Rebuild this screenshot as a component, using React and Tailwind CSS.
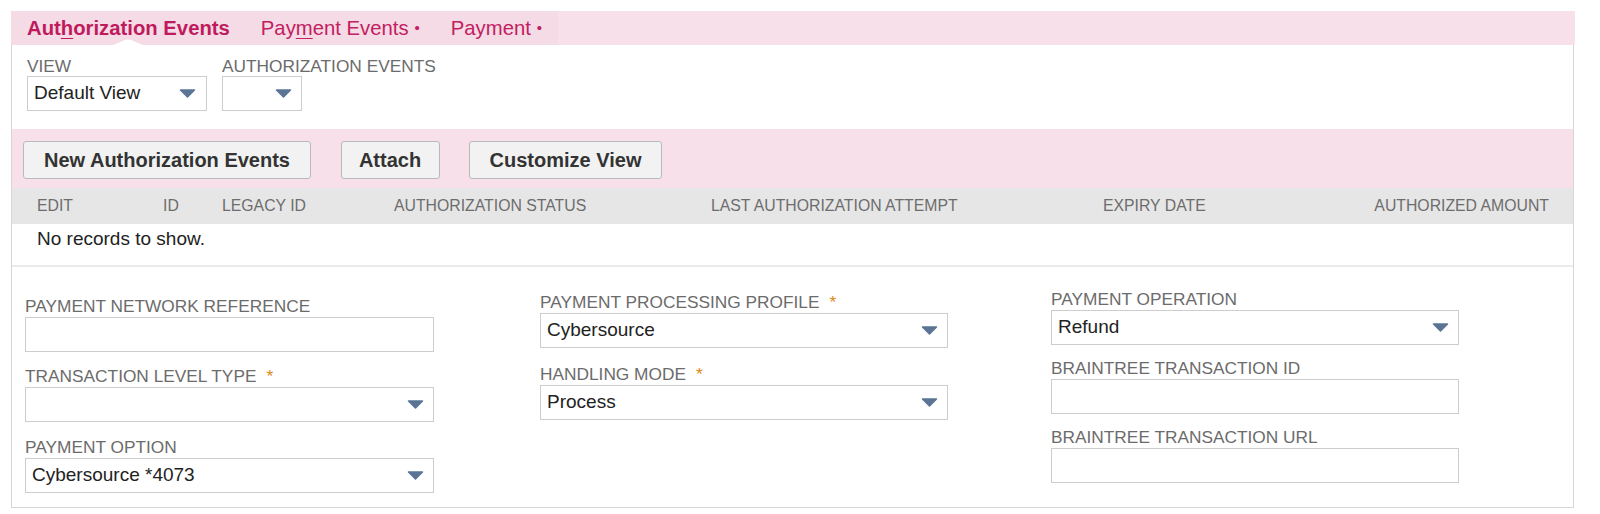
import React from 'react';

const Arrow = () => (
  <svg width="17" height="9" viewBox="0 0 17 9" className="shrink-0">
    <path d="M1.5 1 H15.5 L8.5 8 Z" fill="#5b7495" stroke="#5b7495" strokeWidth="1.5" strokeLinejoin="round" />
  </svg>
);

const Field = ({ label, required, value, select }) => (
  <div>
    <div className="text-[17.3px] leading-[20px] text-[#6b6b6b] whitespace-nowrap">
      {label}
      {required && <span className="ml-[10px] text-[#dc8a12]">*</span>}
    </div>
    <div className="mt-[1px] h-[35px] border border-[#cdcdcd] bg-white flex items-center justify-between pl-[6px] pr-[9px] text-[19px] text-[#222]">
      <span>{value}</span>
      {select && <Arrow />}
    </div>
  </div>
);

const Tab = ({ children, active, dot }) => (
  <div className="relative h-full flex items-center">
    <span className={active ? 'font-bold text-[#bf1a5c]' : 'text-[#c2205f]'}>
      {children}
      {dot && <span className="ml-[6px] text-[15px] align-[2px]">•</span>}
    </span>
    {active && (
      <svg width="30" height="6" viewBox="0 0 30 6" className="absolute bottom-0 left-1/2 -translate-x-1/2">
        <path d="M0 6 L12 1 Q15 0 18 1 L30 6 Z" fill="#ffffff" />
      </svg>
    )}
  </div>
);

const columns = [
  { label: 'EDIT', w: 'w-[126px]' },
  { label: 'ID', w: 'w-[59px]' },
  { label: 'LEGACY ID', w: 'w-[172px]' },
  { label: 'AUTHORIZATION STATUS', w: 'w-[317px]' },
  { label: 'LAST AUTHORIZATION ATTEMPT', w: 'w-[392px]' },
  { label: 'EXPIRY DATE', w: 'w-[269px]' },
];

const Button = ({ children, w }) => (
  <button className={`${w} h-[38px] rounded-[3px] border border-[#b9b9b9] bg-[#f2f2f2] text-[20px] font-bold text-[#333] whitespace-nowrap`}>
    {children}
  </button>
);

export default function App() {
  return (
    <div className="min-h-[514px] bg-white pt-[11px] pl-[11px] font-['Liberation_Sans',Arial,sans-serif]">
      <div className="w-[1564px]">
        {/* tabs */}
        <div className="h-[34px] flex bg-[#f8e0eb] text-[20.3px]">
          <div className="w-[547px] h-full flex items-center gap-[31px] pl-[16px] bg-[#f4dbe6]">
            <Tab active>
              Aut<span className="underline underline-offset-[3px] decoration-1">h</span>orization Events
            </Tab>
            <Tab dot>
              Pay<span className="underline underline-offset-[3px] decoration-1">m</span>ent Events
            </Tab>
            <Tab dot>Payment</Tab>
          </div>
        </div>

        <div className="mr-[1px] border-x border-b border-[#d6d6d6]">
          {/* view pickers */}
          <div className="h-[84px] pt-[10.5px] pl-[15px] flex gap-[15px] text-[#222]">
            <div>
              <div className="text-[17.3px] leading-[20px] text-[#6b6b6b]">VIEW</div>
              <div className="mt-[0.5px] w-[180px] h-[35px] border border-[#cdcdcd] flex items-center justify-between pl-[6px] pr-[10px] text-[19px]">
                <span>Default View</span>
                <Arrow />
              </div>
            </div>
            <div>
              <div className="text-[17.3px] leading-[20px] text-[#6b6b6b]">AUTHORIZATION EVENTS</div>
              <div className="mt-[0.5px] w-[80px] h-[35px] border border-[#cdcdcd] flex items-center justify-end pr-[9px]">
                <Arrow />
              </div>
            </div>
          </div>

          {/* buttons */}
          <div className="h-[59px] bg-[#f8e0eb] pt-[12px] pl-[11px] flex items-start gap-[29.5px]">
            <Button w="w-[288px]">New Authorization Events</Button>
            <Button w="w-[99px]">Attach</Button>
            <Button w="w-[193px]">Customize View</Button>
          </div>

          {/* list header */}
          <div className="h-[36px] bg-[#e6e6e6] flex items-center pl-[25px] pr-[24px] text-[15.8px] text-[#6d6d6d]">
            {columns.map((c) => (
              <div key={c.label} className={`${c.w} whitespace-nowrap`}>
                {c.label}
              </div>
            ))}
            <div className="flex-1 text-right whitespace-nowrap">AUTHORIZED AMOUNT</div>
          </div>
          <div className="h-[43px] border-b-2 border-[#ebebeb] pl-[25px] pt-[4px] text-[19px] leading-[22px] text-[#222]">
            No records to show.
          </div>

          {/* form */}
          <div className="h-[240px] flex pl-[13px]">
            <div className="w-[409px] pt-[28.5px] flex flex-col gap-[14.5px]">
              <Field label="PAYMENT NETWORK REFERENCE" />
              <Field label="TRANSACTION LEVEL TYPE" required select />
              <Field label="PAYMENT OPTION" value="Cybersource *4073" select />
            </div>
            <div className="w-[408px] ml-[106px] pt-[24.5px] flex flex-col gap-[16px]">
              <Field label="PAYMENT PROCESSING PROFILE" required value="Cybersource" select />
              <Field label="HANDLING MODE" required value="Process" select />
            </div>
            <div className="w-[408px] ml-[103px] pt-[21.5px] flex flex-col gap-[13.3px]">
              <Field label="PAYMENT OPERATION" value="Refund" select />
              <Field label="BRAINTREE TRANSACTION ID" />
              <Field label="BRAINTREE TRANSACTION URL" />
            </div>
          </div>
        </div>
      </div>
    </div>
  );
}
